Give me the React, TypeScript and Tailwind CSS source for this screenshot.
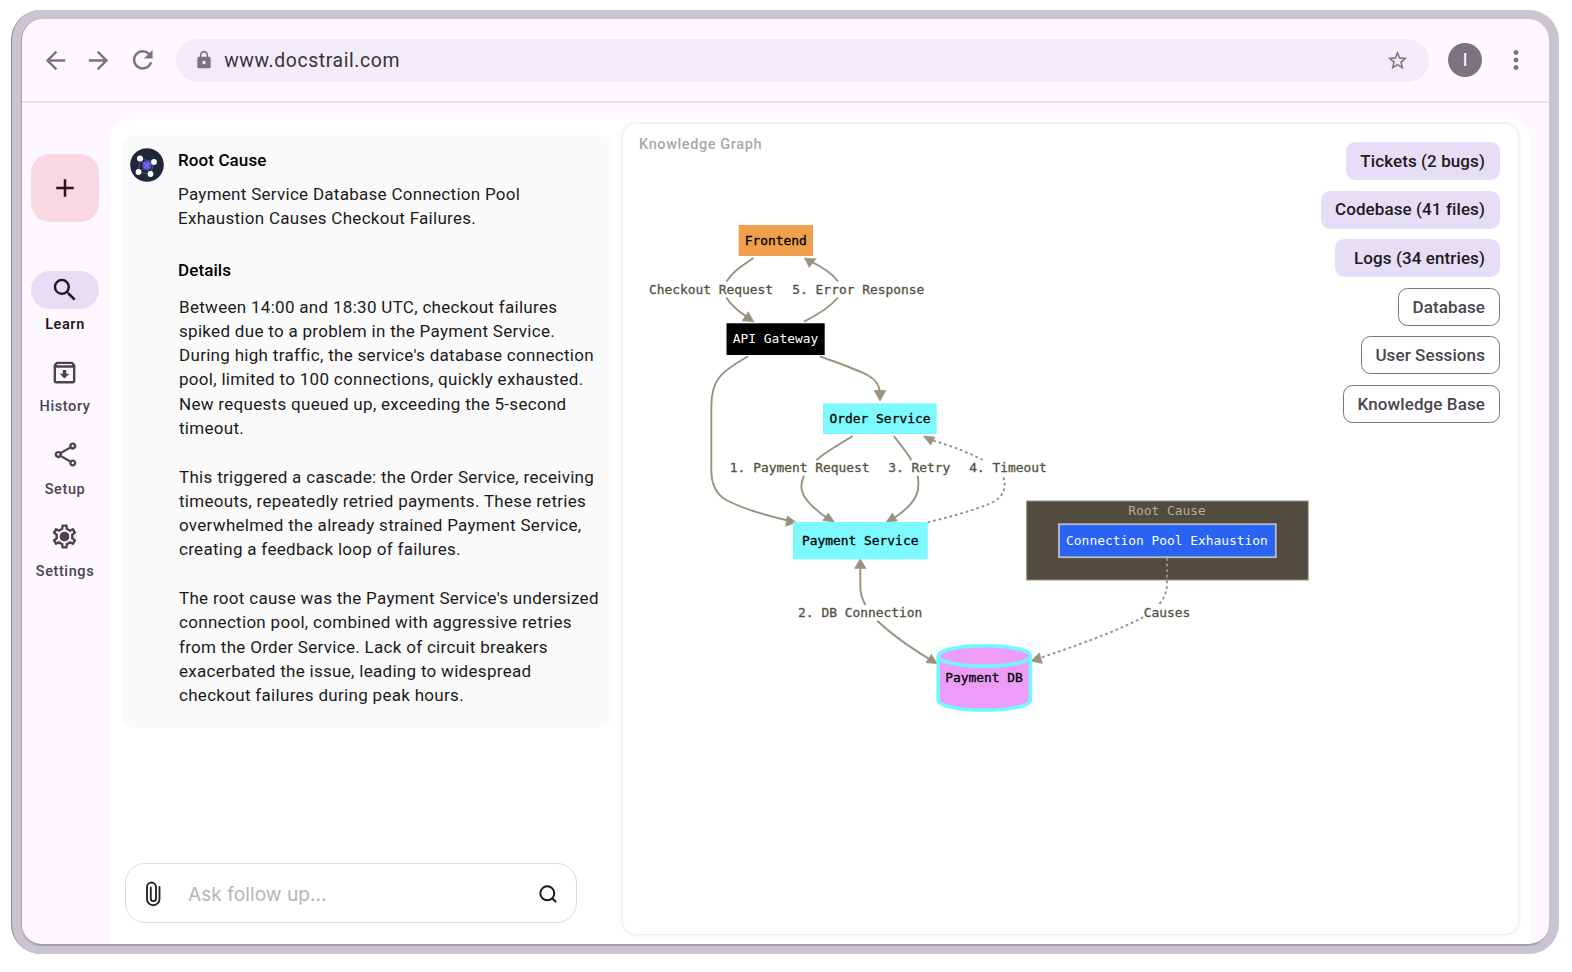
import React from "react";
import {
  MdAdd,
  MdArrowBack,
  MdArrowForward,
  MdLock,
  MdMoreVert,
  MdOutlineArchive,
  MdOutlineSettings,
  MdOutlineShare,
  MdRefresh,
  MdSearch,
  MdStarBorder,
} from "react-icons/md";

function BrowserBar() {
  return (
    <header className="flex h-[84px] shrink-0 items-center border-b-2 border-[#e7e1ea] pl-[18.5px] pr-[18px] text-[#79747e]">
      <MdArrowBack className="size-[29px]" />
      <MdArrowForward className="ml-[14.2px] size-[29px]" />
      <MdRefresh className="ml-[15px] size-[29.5px]" />
      <div className="ml-[19px] flex h-[43px] flex-1 items-center rounded-full bg-[#f2ecf8] pl-[18px] pr-[20px]">
        <MdLock className="size-[20px]" />
        <span className="ml-[10px] flex-1 pt-[2px] text-[19.4px] tracking-[0.6px] text-[#36323c]">www.docstrail.com</span>
        <MdStarBorder className="size-[23px]" />
      </div>
      <div className="ml-[19px] flex size-[34px] items-center justify-center rounded-full bg-[#79747e] pt-px text-[19px] text-white">I</div>
      <MdMoreVert className="ml-[19px] size-[30px]" />
    </header>
  );
}

const navItems = [
  { label: "History", icon: <MdOutlineArchive className="size-[29px]" /> },
  { label: "Setup", icon: <MdOutlineShare className="size-[29px]" /> },
  {
    label: "Settings",
    icon: (
      <span className="relative flex size-[29px] items-center justify-center">
        <MdOutlineSettings className="size-[29px]" />
        <span className="absolute size-[9px] rounded-full bg-[#49454f]" />
      </span>
    ),
  },
];

function Sidebar() {
  return (
    <nav className="flex w-[87px] shrink-0 flex-col items-center pr-[2px] pt-[51px] text-[14.5px] font-medium leading-[20px] tracking-[0.6px] text-[#49454f]">
      <button className="flex size-[68px] items-center justify-center rounded-[19px] bg-[#f9d8e2] text-[#31111d]">
        <MdAdd className="size-[30px]" />
      </button>
      <div className="mt-[49px] flex h-[82.4px] flex-col items-center text-[#1d1b20]">
        <span className="flex h-[38px] w-[68px] items-center justify-center rounded-full bg-[#e6def6]">
          <MdSearch className="size-[30px]" />
        </span>
        <span className="mt-[6px] pl-px font-semibold">Learn</span>
      </div>
      {navItems.map((n) => (
        <div key={n.label} className="flex h-[82.2px] flex-col items-center">
          <span className="flex h-[38px] items-center pl-px">{n.icon}</span>
          <span className="mt-[6px] pl-px">{n.label}</span>
        </div>
      ))}
    </nav>
  );
}

function AgentAvatar() {
  return (
    <svg className="size-[34px]" viewBox="0 0 34 34">
      <circle cx="17" cy="17" r="16.8" fill="#1f2739" />
      <path d="M10 10.500 24 14 20.500 26 8.500 24Z M10 10.500 20.500 26 M24 14 8.500 24" stroke="#6b6f92" strokeWidth=".7" fill="none" />
      <circle cx="16.800" cy="17.500" r="4.600" fill="#5751d8" />
      <path d="M14 14.500 19.500 20.500M19.500 15 14 20" stroke="#9894ff" strokeWidth=".8" />
      <g fill="#fff">
        <circle cx="10" cy="10.500" r="3" />
        <circle cx="24" cy="14" r="2.900" />
        <circle cx="8.500" cy="24" r="2.900" />
        <circle cx="20.500" cy="26" r="2.900" />
      </g>
    </svg>
  );
}

const details = [
  [
    "Between 14:00 and 18:30 UTC, checkout failures",
    "spiked due to a problem in the Payment Service.",
    "During high traffic, the service's database connection",
    "pool, limited to 100 connections, quickly exhausted.",
    "New requests queued up, exceeding the 5-second",
    "timeout.",
  ],
  [
    "This triggered a cascade: the Order Service, receiving",
    "timeouts, repeatedly retried payments. These retries",
    "overwhelmed the already strained Payment Service,",
    "creating a feedback loop of failures.",
  ],
  [
    "The root cause was the Payment Service's undersized",
    "connection pool, combined with aggressive retries",
    "from the Order Service. Lack of circuit breakers",
    "exacerbated the issue, leading to widespread",
    "checkout failures during peak hours.",
  ],
];

function Conversation() {
  return (
    <section className="flex w-[503px] shrink-0 flex-col pl-[12px] pt-[16px]">
      <article className="flex h-[593px] rounded-[14px] bg-[#fafafa] pl-[9px] pt-[13px] text-[17px] leading-[24.28px] text-[#1a1a1c]">
        <AgentAvatar />
        <div className="ml-[14px] flex-1 whitespace-nowrap tracking-[0.3px]">
          <h2 className="font-medium tracking-[0.1px] text-black">Root Cause</h2>
          <p className="mt-[9.500px] tracking-[0.28px]">
            Payment Service Database Connection Pool
            <br />
            Exhaustion Causes Checkout Failures.
          </p>
          <h2 className="mt-[28px] font-medium tracking-[0.1px] text-black">Details</h2>
          <div className="ml-px mt-[12px] flex flex-col gap-[24.28px]">
            {details.map((lines) => (
              <p key={lines[0]}>
                {lines.map((l) => (
                  <span key={l} className="block">{l}</span>
                ))}
              </p>
            ))}
          </div>
        </div>
      </article>
      <div className="ml-[4px] mt-[135px] flex h-[60px] w-[452px] items-center rounded-[20px] border border-[#dcdcdc] bg-white pl-[18px] pr-[18px]">
        <svg className="mt-px h-[26px] w-[18px]" viewBox="0 0 18 26" fill="none" stroke="#25252b" strokeWidth="1.900" strokeLinecap="round">
          <path d="M15.500 6v12a6.200 6.200 0 0 1-12.500 0V6a4.400 4.400 0 0 1 9 0v11.500a2.500 2.500 0 0 1-5.200 0V6.500" />
        </svg>
        <span className="ml-[26px] flex-1 pt-[2px] font-[Inter,sans-serif] text-[19.2px] text-[#b5b5b9]">Ask follow up...</span>
        <svg className="mt-px size-[20px]" viewBox="0 0 20 20" fill="none" stroke="#1b1b1f" strokeWidth="2" strokeLinecap="round">
          <circle cx="9.300" cy="9.300" r="7" />
          <path d="m14.500 14.500 3 3" />
        </svg>
      </div>
    </section>
  );
}

type Label = { text: string; x: number; y: number; fill: string; weight: number };

const labels: Label[] = [
  { text: "Frontend", x: 775.8, y: 244.6, fill: "#000", weight: 0.3 },
  { text: "API Gateway", x: 775.5, y: 343, fill: "#fff", weight: 0 },
  { text: "Order Service", x: 880, y: 422.8, fill: "#000", weight: 0.3 },
  { text: "Payment Service", x: 860.2, y: 544.8, fill: "#000", weight: 0.3 },
  { text: "Payment DB", x: 984, y: 682, fill: "#000", weight: 0.3 },
  { text: "Root Cause", x: 1167, y: 514.9, fill: "#b5ad9c", weight: 0 },
  { text: "Connection Pool Exhaustion", x: 1167, y: 544.8, fill: "#fff", weight: 0 },
  { text: "Checkout Request", x: 711, y: 294, fill: "#565043", weight: 0.3 },
  { text: "5. Error Response", x: 858.3, y: 294, fill: "#565043", weight: 0.3 },
  { text: "1. Payment Request", x: 799.7, y: 472.2, fill: "#565043", weight: 0.3 },
  { text: "3. Retry", x: 919.3, y: 472.2, fill: "#565043", weight: 0.3 },
  { text: "4. Timeout", x: 1008, y: 472.2, fill: "#565043", weight: 0.3 },
  { text: "2. DB Connection", x: 860.2, y: 617.2, fill: "#565043", weight: 0.3 },
  { text: "Causes", x: 1167, y: 617.2, fill: "#565043", weight: 0.3 },
];

function Diagram() {
  return (
    <svg className="h-[560px] w-[700px] shrink-0" viewBox="624 180 700 560">
      <rect x="1026.700" y="501" width="281.500" height="79" fill="#514c3f" stroke="#9a9180" />
      <rect x="1059" y="524.200" width="216.800" height="33" fill="#2963f4" stroke="#bcbdc2" strokeWidth="1.800" />
      <g fill="none" stroke="#9a917f" strokeWidth="1.900">
        <path d="M753.500 258C742 266 733 271 726.500 281.500M726.300 297.500C731 305 738 311 747 317" />
        <path d="M804 321.700C817 315 831 306 838 297.500M838 281.500C832 273 823 268 812 262" />
        <path d="M820 356.300C838 363 856 369 868.300 375.500Q879.500 382 879.800 392" />
        <path d="M748 356.300C738 362 727 368 720 376.500C713 385 711.300 394 711.300 406V470C711.300 485 717 495 727 500.500C742 508 764 515 788 520.500" />
        <path d="M852.500 436C839 445 826 451 816.500 460.300M804 475.700C800 486 801 490 804 496C809 504 817 511 827 518" />
        <path d="M893.700 436C900 444 906 451 911.500 460.300M917.700 475.700C919 484 919 490 916 496C912 504 906 510 895 517.500" />
        <path d="M860.300 567V586C860.300 593 862 599 865.500 605M877.300 620.700C890 633 908 646 930 659.500" />
        <g strokeDasharray="2.800 2.800">
          <path d="M927.700 522.300C949 517 972 511 990 503.500C1004 497 1007 488 1003 476M982.700 460C970 453 951 446 933 440.500" />
          <path d="M1167 558V583C1167 592 1164 599 1158.300 605M1143.300 617.300C1120 629 1096 639 1040 658" />
        </g>
      </g>
      <g fill="#9a917f" stroke="#9a917f" strokeWidth=".5">
        <path d="M742 320.700 748.300 311.700 754 322Z" />
        <path d="M804.300 258 816 258.700 809.300 267.600Z" />
        <path d="M874 390.300H886L880 401.300Z" />
        <path d="M787.300 515.800 785.500 526.300 796.700 522.500Z" />
        <path d="M822.700 520.500 828.300 513 834.700 522.300Z" />
        <path d="M886 522.300 892.300 513 897.500 521Z" />
        <path d="M923.300 436 935 437 930.700 445.200Z" />
        <path d="M854.500 568.500H866.200L860.300 558.500Z" />
        <path d="M925.800 662.700 931.300 654.300 937.500 663.700Z" />
        <path d="M1030.700 661.300 1039.300 652.700 1042.500 663.500Z" />
      </g>
      <rect x="738.700" y="225" width="74.300" height="31" fill="#f09f4d" />
      <rect x="726.500" y="323.300" width="98.200" height="31.700" fill="#000" />
      <rect x="823" y="403.300" width="113.700" height="30.700" fill="#7cfaff" />
      <rect x="793" y="522" width="134.700" height="37.300" fill="#7cfaff" />
      <g fill="#ed9df8" stroke="#6ff8fd" strokeWidth="3.600">
        <path d="M938.300 656V700C938.300 705.700 959 710 984.400 710S1030.400 705.700 1030.400 700V656" />
        <ellipse cx="984.400" cy="656" rx="46.100" ry="10.300" />
      </g>
      {labels.map((l) => (
        <text
          key={l.text}
          x={l.x}
          y={l.y}
          fill={l.fill}
          stroke={l.fill}
          strokeWidth={l.weight}
          textAnchor="middle"
          className="font-['DejaVu_Sans_Mono',monospace] text-[12.9px]"
        >
          {l.text}
        </text>
      ))}
    </svg>
  );
}

const sources = [
  { label: "Tickets (2 bugs)", cls: "w-[154px] border-transparent bg-[#e6def6] text-[#1d1b20]" },
  { label: "Codebase (41 files)", cls: "w-[179.5px] border-transparent bg-[#e6def6] text-[#1d1b20]" },
  { label: "Logs (34 entries)", cls: "w-[165px] border-transparent bg-[#e6def6] text-[#1d1b20]" },
  { label: "Database", cls: "w-[102px] border-[#79747e] text-[#49454f]" },
  { label: "User Sessions", cls: "w-[139px] border-[#79747e] text-[#49454f]" },
  { label: "Knowledge Base", cls: "w-[157px] border-[#79747e] text-[#49454f]" },
];

function KnowledgeGraph() {
  return (
    <section className="ml-[10px] mt-[4px] flex h-[812px] w-[897px] justify-between rounded-[14px] border border-[#efefef] bg-white pr-[18px] shadow-[0_0_3px_1px_rgba(0,0,0,0.06)]">
      <div className="flex flex-col">
        <h3 className="ml-[16px] mt-[11px] h-[20px] whitespace-nowrap text-[14.5px] font-medium leading-[20px] tracking-[0.6px] text-[#a9a9a9]">
          Knowledge Graph
        </h3>
        <div className="ml-px mt-[25px] flex">
          <Diagram />
        </div>
      </div>
      <div className="-ml-[20px] flex flex-col items-end gap-[10.6px] pt-[18px]">
        {sources.map((s) => (
          <button
            key={s.label}
            className={`flex h-[38px] items-center justify-end whitespace-nowrap rounded-[9.5px] border pr-[14px] pt-px text-[17px] font-medium tracking-[0.1px] ${s.cls}`}
          >
            {s.label}
          </button>
        ))}
      </div>
    </section>
  );
}

export default function App() {
  return (
    <div className="flex h-[972px] w-[1572px] bg-white pl-[11px] pt-[10px] font-[Roboto,sans-serif]">
      <div className="flex h-[944px] w-[1548px] rounded-[30px] border-l border-[#8b8691] bg-[#cac4d0] pb-[8px] pl-[9px] pr-[10px] pt-[9px]">
        <div className="flex min-w-0 flex-1 flex-col overflow-hidden rounded-[21px] border-b-2 border-l border-[#a5a0aa] bg-[#fdf7ff]">
          <BrowserBar />
          <div className="flex min-h-0 flex-1">
            <Sidebar />
            <main className="mt-[16px] flex h-[838px] w-[1422px] shrink-0 rounded-[22px] bg-white">
              <Conversation />
              <KnowledgeGraph />
            </main>
          </div>
        </div>
      </div>
    </div>
  );
}
